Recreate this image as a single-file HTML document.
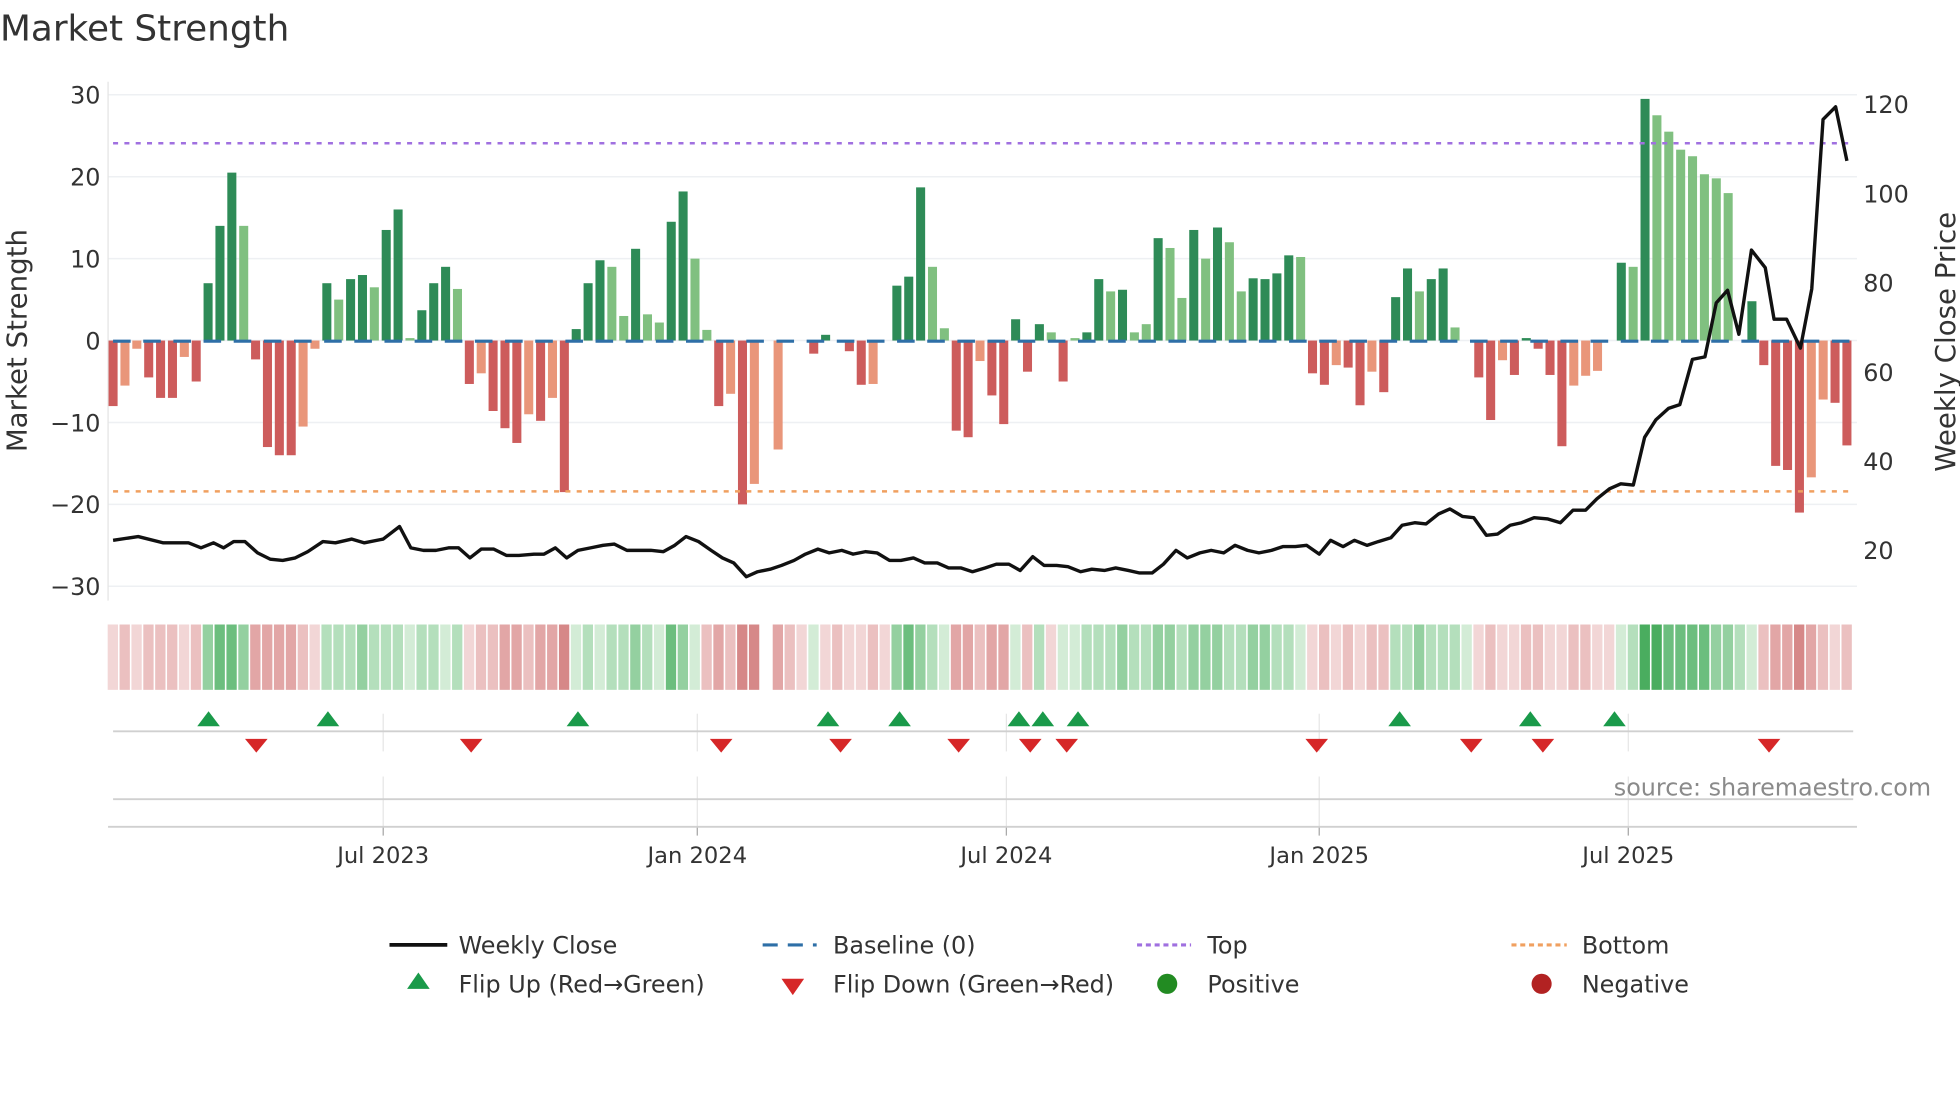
<!DOCTYPE html>
<html><head><meta charset="utf-8">
<style>
html,body{margin:0;padding:0;background:#fff;overflow:hidden}
svg{display:block}
text{font-family:"DejaVu Sans","Liberation Sans",sans-serif;fill:#333}
</style></head>
<body>
<svg id="s" width="1960" height="1102" viewBox="0 0 1560 877" xmlns="http://www.w3.org/2000/svg">
<text x="0" y="32" font-size="28.5">Market Strength</text>
<g id="grid"></g>
<g id="heat"></g>
<g id="bars"></g>
<g id="rest"></g>
<text transform="translate(21,271) rotate(-90)" font-size="22" text-anchor="middle">Market Strength</text>
<text transform="translate(1556,272) rotate(-90)" font-size="22" text-anchor="middle">Weekly Close Price</text>
<text x="1537" y="633" font-size="19" text-anchor="end" style="fill:#8a8a8a">source: sharemaestro.com</text>
<g font-size="19">
<line x1="310" y1="752" x2="356" y2="752" stroke="#111" stroke-width="3"/>
<text x="365" y="759">Weekly Close</text>
<line x1="607" y1="752" x2="650" y2="752" stroke="#2e6fa7" stroke-width="2.5" stroke-dasharray="12,8"/>
<text x="663" y="759">Baseline (0)</text>
<line x1="905" y1="752" x2="948" y2="752" stroke="#a070e0" stroke-width="2.5" stroke-dasharray="4,3"/>
<text x="961" y="759">Top</text>
<line x1="1203" y1="752" x2="1247" y2="752" stroke="#f0a060" stroke-width="2.5" stroke-dasharray="4,3"/>
<text x="1259" y="759">Bottom</text>
<polygon points="333,774 342,787 324,787" fill="#1a9a4a"/>
<text x="365" y="790">Flip Up (Red→Green)</text>
<polygon points="622,779 640,779 631,792" fill="#d62728"/>
<text x="663" y="790">Flip Down (Green→Red)</text>
<circle cx="929" cy="783" r="8" fill="#228b22"/>
<text x="961" y="790">Positive</text>
<circle cx="1227" cy="783" r="8" fill="#b22222"/>
<text x="1259" y="790">Negative</text>
</g>
</svg>
<script>
var NS="http://www.w3.org/2000/svg";
function el(p,t,a,txt){var e=document.createElementNS(NS,t);for(var k in a)e.setAttribute(k,a[k]);if(txt!=null)e.textContent=txt;document.getElementById(p).appendChild(e);return e;}
for(var v=-30;v<=30;v+=10){var y=271-v*6.52;el('grid','line',{x1:86,x2:1478,y1:y,y2:y,stroke:'#eef0f3','stroke-width':1.2});
el('grid','text',{x:80,y:y+7,'font-size':19,'text-anchor':'end'},v<0?'\u2212'+(-v):''+v);}
el('grid','line',{x1:86,x2:86,y1:65,y2:478,stroke:'#e4e4e4','stroke-width':1});
var rp=[120,100,80,60,40,20];rp.forEach(function(p){var y=83+(120-p)*3.55;el('grid','text',{x:1483,y:y+7,'font-size':19},''+p);});
el('rest','line',{x1:90,x2:1476,y1:114,y2:114,stroke:'#a070e0','stroke-width':2,'stroke-dasharray':'4,5'});
el('rest','line',{x1:90,x2:1476,y1:391,y2:391,stroke:'#f0a060','stroke-width':2,'stroke-dasharray':'4,5'});
var B=[[-8,'R'],[-5.5,'O'],[-1,'O'],[-4.5,'R'],[-7,'R'],[-7,'R'],[-2,'O'],[-5,'R'],[7,'D'],[14,'D'],[20.5,'D'],[14,'L'],[-2.3,'R'],[-13,'R'],[-14,'R'],[-14,'R'],[-10.5,'O'],[-1,'O'],[7,'D'],[5,'L'],[7.5,'D'],[8,'D'],[6.5,'L'],[13.5,'D'],[16,'D'],[0.3,'L'],[3.7,'D'],[7,'D'],[9,'D'],[6.3,'L'],[-5.3,'R'],[-4,'O'],[-8.6,'R'],[-10.7,'R'],[-12.5,'R'],[-9,'O'],[-9.8,'R'],[-7,'O'],[-18.5,'R'],[1.4,'D'],[7,'D'],[9.8,'D'],[9,'L'],[3,'L'],[11.2,'D'],[3.2,'L'],[2.2,'L'],[14.5,'D'],[18.2,'D'],[10,'L'],[1.3,'L'],[-8,'R'],[-6.5,'O'],[-20,'R'],[-17.5,'O'],[0,'R'],[-13.3,'O'],[0,'R'],[0,'R'],[-1.6,'R'],[0.7,'D'],[0,'R'],[-1.3,'R'],[-5.4,'R'],[-5.3,'O'],[0,'R'],[6.7,'D'],[7.8,'D'],[18.7,'D'],[9,'L'],[1.5,'L'],[-11,'R'],[-11.8,'R'],[-2.5,'O'],[-6.7,'R'],[-10.2,'R'],[2.6,'D'],[-3.8,'R'],[2,'D'],[1,'L'],[-5,'R'],[0.3,'L'],[1,'D'],[7.5,'D'],[6,'L'],[6.2,'D'],[1,'L'],[2,'L'],[12.5,'D'],[11.3,'L'],[5.2,'L'],[13.5,'D'],[10,'L'],[13.8,'D'],[12,'L'],[6,'L'],[7.6,'D'],[7.5,'D'],[8.2,'D'],[10.4,'D'],[10.2,'L'],[-4,'R'],[-5.4,'R'],[-3,'O'],[-3.3,'R'],[-7.9,'R'],[-3.8,'O'],[-6.3,'R'],[5.3,'D'],[8.8,'D'],[6,'L'],[7.5,'D'],[8.8,'D'],[1.6,'L'],[0,'R'],[-4.5,'R'],[-9.7,'R'],[-2.4,'O'],[-4.2,'R'],[0.3,'D'],[-1,'R'],[-4.2,'R'],[-12.9,'R'],[-5.5,'O'],[-4.3,'O'],[-3.7,'O'],[0,'R'],[9.5,'D'],[9,'L'],[29.5,'D'],[27.5,'L'],[25.5,'L'],[23.3,'L'],[22.5,'L'],[20.3,'L'],[19.8,'L'],[18,'L'],[0,'R'],[4.8,'D'],[-3,'R'],[-15.3,'R'],[-15.8,'R'],[-21,'R'],[-16.7,'O'],[-7.2,'O'],[-7.6,'R'],[-12.8,'R']];
var N=B.length, sp=(1470-90)/(N-1);
var col={D:'#2e8b57',L:'#80c080',R:'#cd5c5c',O:'#e9967a'};
var heat="ababbbab"+"3443"+"ccccba"+"2223222"+"12212"+"abbccbccd"+"12122321"+"431"+"bcbdd"+" "+"cba1abaaba"+"34321"+"ccbcc"+"1b2a1"+"12223223323332233221"+"abababb"+"2232221"+"abaabbaabbaa"+"12"+"55444433"+"21"+"bccdcbab";
var hc={a:'#f2d6d6',b:'#ebc0c0',c:'#e2a6a6',d:'#d68888','1':'#d3ecd6','2':'#b4dfbc','3':'#94d0a0','4':'#6cbe7e','5':'#4aad5f'};
for(var i=0;i<N;i++){var x=90+i*sp,v=B[i][0];var y=271-v*6.52;
if(v!==0)el('bars','rect',{x:x-3.6,y:Math.min(y,271),width:7.2,height:Math.abs(v*6.52),fill:col[B[i][1]]});
var c=heat[i];if(c&&c!==' ')el('heat','rect',{x:x-4.3,y:497,width:8.2,height:52,fill:hc[c]});}
el('rest','line',{x1:90,x2:1476,y1:271.5,y2:271.5,stroke:'#2e6fa7','stroke-width':2.5,'stroke-dasharray':'14,10'});
var P=[[90,430],[110,427],[130,432],[150,432],[160,436],[170,432],[178,436],[186,431],[195,431],[205,440],[215,445],[225,446],[235,444],[245,439],[257,431],[267,432],[280,429],[290,432],[305,429],[318,419],[327,436],[337,438],[347,438],[357,436],[365,436],[374,444],[383,437],[393,437],[403,442],[413,442],[425,441],[433,441],[442,436],[451,444],[460,438],[470,436],[480,434],[489,433],[499,438],[518,438],[528,439],[537,434],[546,427],[556,431],[566,438],[575,444],[584,448],[594,459],[603,455],[613,453],[622,450],[632,446],[641,441],[651,437],[660,440],[670,438],[679,441],[689,439],[698,440],[708,446],[717,446],[727,444],[736,448],[746,448],[755,452],[765,452],[774,455],[784,452],[793,449],[803,449],[812,454],[822,443],[831,450],[841,450],[850,451],[860,455],[869,453],[879,454],[888,452],[898,454],[907,456],[917,456],[926,449],[936,438],[945,444],[955,440],[964,438],[974,440],[983,434],[993,438],[1002,440],[1012,438],[1021,435],[1031,435],[1040,434],[1050,441],[1059,430],[1069,435],[1078,430],[1088,434],[1097,431],[1107,428],[1116,418],[1126,416],[1135,417],[1145,409],[1154,405],[1164,411],[1173,412],[1183,426],[1192,425],[1202,418],[1211,416],[1221,412],[1232,413],[1242,416],[1252,406],[1262,406],[1271,397],[1281,389],[1290,385],[1300,386],[1309,348],[1318,334],[1328,325],[1337,322],[1347,286],[1357,284],[1366,241],[1375,231],[1384,266],[1394,199],[1405,213],[1412,254],[1422,254],[1433,277],[1442,230],[1451,95],[1461,85],[1470,128]];
el('rest','polyline',{points:P.map(function(p){return p.join(',')}).join(' '),fill:'none',stroke:'#111','stroke-width':2.7,'stroke-linejoin':'round'});
[305,555,801,1050,1296].forEach(function(x,k){
el('rest','line',{x1:x,x2:x,y1:568,y2:598,stroke:'#e6e6e6','stroke-width':1});
el('rest','line',{x1:x,x2:x,y1:618,y2:665,stroke:'#e6e6e6','stroke-width':1});
el('rest','line',{x1:x,x2:x,y1:658,y2:665,stroke:'#aaa','stroke-width':1});
el('rest','text',{x:x,y:687,'font-size':18,'text-anchor':'middle'},['Jul 2023','Jan 2024','Jul 2024','Jan 2025','Jul 2025'][k]);});
el('rest','line',{x1:90,x2:1475,y1:582,y2:582,stroke:'#d0d0d0','stroke-width':1.5});
el('rest','line',{x1:90,x2:1475,y1:636,y2:636,stroke:'#d0d0d0','stroke-width':1.5});
el('rest','line',{x1:86,x2:1478,y1:658,y2:658,stroke:'#d0d0d0','stroke-width':1.5});
[166,261,460,659,716,811,830,858,1114,1218,1285].forEach(function(x){el('rest','polygon',{points:(x)+',566 '+(x+9)+',578 '+(x-9)+',578',fill:'#1a9a4a'});});
[204,375,574,669,763,820,849,1048,1171,1228,1408].forEach(function(x){el('rest','polygon',{points:(x-9)+',588 '+(x+9)+',588 '+x+',599',fill:'#d62728'});});
</script>
</body></html>
